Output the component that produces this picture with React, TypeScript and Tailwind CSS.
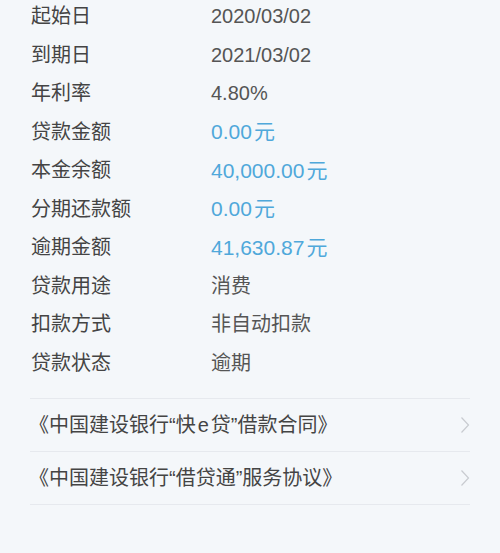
import React from "react";

const rows: { label: string; value: string; unit?: string }[] = [
  { label: "起始日", value: "2020/03/02" },
  { label: "到期日", value: "2021/03/02" },
  { label: "年利率", value: "4.80%" },
  { label: "贷款金额", value: "0.00", unit: "元" },
  { label: "本金余额", value: "40,000.00", unit: "元" },
  { label: "分期还款额", value: "0.00", unit: "元" },
  { label: "逾期金额", value: "41,630.87", unit: "元" },
  { label: "贷款用途", value: "消费" },
  { label: "扣款方式", value: "非自动扣款" },
  { label: "贷款状态", value: "逾期" },
];

function Chevron() {
  return (
    <svg width="10" height="18" viewBox="0 0 10 18" fill="none">
      <path d="M1.5 1.5 L8.5 9 L1.5 16.5" stroke="#c8cbd0" strokeWidth="1.2" />
    </svg>
  );
}

export default function App() {
  return (
    <div
      className="w-[500px] h-[553px] overflow-hidden bg-[#f4f7fa] text-[#444444]"
      style={{ fontFamily: '"Liberation Sans", "Noto Sans CJK SC", sans-serif' }}
    >
      <div className="px-[30px] -mt-[3px] pb-[16px]">
        {rows.map((r) => (
          <div key={r.label} className="flex items-center h-[38.5px] text-[20px]">
            <div className="w-[181px] pl-[1px]">{r.label}</div>
            {r.unit ? (
              <div className="flex items-center text-[#4fa8da] text-[21px]">
                <span>{r.value}</span>
                <span className="ml-[2px]">{r.unit}</span>
              </div>
            ) : (
              <div className="text-[#555555]">{r.value}</div>
            )}
          </div>
        ))}
      </div>
      <div className="mx-[30px] border-t border-[#e6e9ee]">
        <div className="flex items-center justify-between h-[53px] border-b border-[#e6e9ee] text-[20px]">
          <span className="-ml-[1px] whitespace-pre">
            《中国建设银行“快<span className="mx-[2px]">e</span>贷”借款合同》
          </span>
          <Chevron />
        </div>
        <div className="flex items-center justify-between h-[53px] border-b border-[#e6e9ee] text-[20px]">
          <span className="-ml-[1px] whitespace-pre">《中国建设银行“借贷通”服务协议》</span>
          <Chevron />
        </div>
      </div>
    </div>
  );
}
